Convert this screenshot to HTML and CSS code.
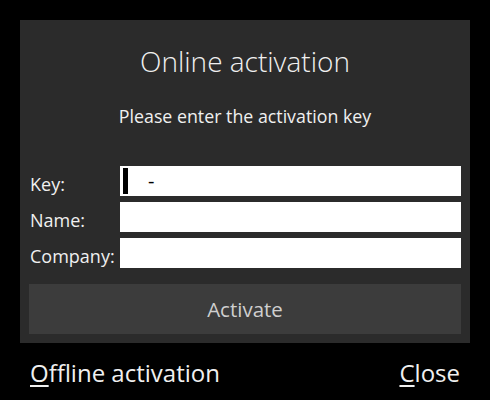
FILE: index.html
```html
<!DOCTYPE html>
<html>
<head>
<meta charset="utf-8">
<link rel="stylesheet" href="styles.css">
</head>
<body>
<div class="panel">
  <h1 class="title">Online activation</h1>
  <p class="subtitle">Please enter the activation key</p>
  <div class="form">
    <label class="label">Key:</label>
    <div class="input key"><span class="caret"></span><span class="dash">-</span></div>
    <label class="label">Name:</label>
    <div class="input"></div>
    <label class="label">Company:</label>
    <div class="input"></div>
  </div>
  <button class="activate">Activate</button>
</div>
<div class="footer">
  <span class="link"><u>O</u>ffline activation</span>
  <span class="link"><u>C</u>lose</span>
</div>
</body>
</html>
```
FILE: styles.css
```css
html, body {
  margin: 0;
  padding: 0;
  background: #000;
  width: 490px;
  height: 400px;
  overflow: hidden;
  font-family: "Open Sans", "Noto Sans", sans-serif;
  color: #f0f0f0;
}
.panel {
  margin: 20px 20px 0;
  height: 323px;
  box-sizing: border-box;
  padding: 0 9px;
  background: #2b2b2b;
  display: flex;
  flex-direction: column;
}
.title {
  margin: 21px 0 0;
  font-weight: 300;
  font-size: 28px;
  line-height: 40px;
  text-align: center;
}
.subtitle {
  margin: 23px 0 0;
  font-weight: 400;
  font-size: 17.8px;
  line-height: 24px;
  text-align: center;
}
.form {
  margin-top: 38px;
  display: grid;
  grid-template-columns: 91px 1fr;
  row-gap: 6px;
}
.label {
  font-size: 18px;
  font-weight: 400;
  line-height: 30px;
  padding-left: 1px;
  padding-top: 3px;
  height: 30px;
  box-sizing: border-box;
  white-space: nowrap;
}
.input {
  height: 30px;
  background: #fff;
  position: relative;
}
.caret {
  position: absolute;
  left: 3px;
  top: 2px;
  width: 5px;
  height: 26px;
  background: #000;
}
.dash {
  position: absolute;
  left: 28px;
  top: 0;
  color: #000;
  font-size: 20px;
  line-height: 30px;
}
.activate {
  margin-top: 16px;
  height: 50px;
  border: none;
  background: #3c3c3c;
  color: #cfcfcf;
  font-family: "Open Sans", "Noto Sans", sans-serif;
  font-size: 20.5px;
  font-weight: 400;
  padding: 0;
}
.footer {
  display: flex;
  justify-content: space-between;
  padding: 14px 30px 0;
}
.link {
  font-size: 24px;
  font-weight: 400;
  line-height: 32px;
  color: #f0f0f0;
}
.link u {
  text-decoration-thickness: 2px;
  text-underline-offset: 3px;
}
```
